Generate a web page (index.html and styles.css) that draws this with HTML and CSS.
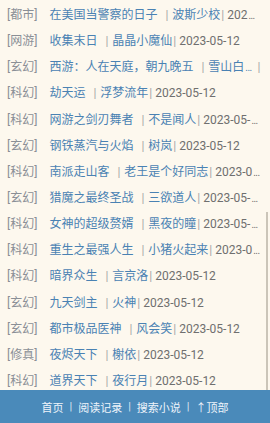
FILE: index.html
```html
<!DOCTYPE html>
<html lang="zh">
<head>
<meta charset="utf-8">
<link rel="stylesheet" href="styles.css">
</head>
<body>
<ul class="list">
  <li class="row"><span class="cat">[都市]</span><span class="title">在美国当警察的日子</span><span class="sep1">|</span><span class="author">波斯少校</span><span class="sep2">|</span><span class="date">202<span class="ell">...</span></span></li>
  <li class="row"><span class="cat">[网游]</span><span class="title">收集末日</span><span class="sep1">|</span><span class="author">晶晶小魔仙</span><span class="sep2">|</span><span class="date">2023-05-12</span></li>
  <li class="row"><span class="cat">[玄幻]</span><span class="title">西游：人在天庭，朝九晚五</span><span class="sep1">|</span><span class="author">雪山白<span class="ell">...</span></span><span class="sep3">|</span></li>
  <li class="row"><span class="cat">[科幻]</span><span class="title">劫天运</span><span class="sep1">|</span><span class="author">浮梦流年</span><span class="sep2">|</span><span class="date">2023-05-12</span></li>
  <li class="row"><span class="cat">[科幻]</span><span class="title">网游之剑刃舞者</span><span class="sep1">|</span><span class="author">不是闻人</span><span class="sep2">|</span><span class="date">2023-05-<span class="ell">...</span></span></li>
  <li class="row"><span class="cat">[玄幻]</span><span class="title">钢铁蒸汽与火焰</span><span class="sep1">|</span><span class="author">树岚</span><span class="sep2">|</span><span class="date">2023-05-12</span></li>
  <li class="row"><span class="cat">[科幻]</span><span class="title">南派走山客</span><span class="sep1">|</span><span class="author">老王是个好同志</span><span class="sep2">|</span><span class="date">2023-0<span class="ell">...</span></span></li>
  <li class="row"><span class="cat">[玄幻]</span><span class="title">猎魔之最终圣战</span><span class="sep1">|</span><span class="author">三欲道人</span><span class="sep2">|</span><span class="date">2023-05-<span class="ell">...</span></span></li>
  <li class="row"><span class="cat">[科幻]</span><span class="title">女神的超级赘婿</span><span class="sep1">|</span><span class="author">黑夜的瞳</span><span class="sep2">|</span><span class="date">2023-05-<span class="ell">...</span></span></li>
  <li class="row"><span class="cat">[科幻]</span><span class="title">重生之最强人生</span><span class="sep1">|</span><span class="author">小猪火起来</span><span class="sep2">|</span><span class="date">2023-0<span class="ell">...</span></span></li>
  <li class="row"><span class="cat">[科幻]</span><span class="title">暗界众生</span><span class="sep1">|</span><span class="author">言京洛</span><span class="sep2">|</span><span class="date">2023-05-12</span></li>
  <li class="row"><span class="cat">[玄幻]</span><span class="title">九天剑主</span><span class="sep1">|</span><span class="author">火神</span><span class="sep2">|</span><span class="date">2023-05-12</span></li>
  <li class="row"><span class="cat">[玄幻]</span><span class="title">都市极品医神</span><span class="sep1">|</span><span class="author">风会笑</span><span class="sep2">|</span><span class="date">2023-05-12</span></li>
  <li class="row"><span class="cat">[修真]</span><span class="title">夜烬天下</span><span class="sep1">|</span><span class="author">榭依</span><span class="sep2">|</span><span class="date">2023-05-12</span></li>
  <li class="row"><span class="cat">[科幻]</span><span class="title">道界天下</span><span class="sep1">|</span><span class="author">夜行月</span><span class="sep2">|</span><span class="date">2023-05-12</span></li>
</ul>
<div class="scrollbar"></div>
<nav class="footer">
  <a class="nav-link">首页</a><span class="nav-sep">|</span><a class="nav-link">阅读记录</a><span class="nav-sep">|</span><a class="nav-link">搜索小说</a><span class="nav-sep">|</span><a class="nav-link">↑顶部</a>
</nav>
</body>
</html>
```
FILE: styles.css
```css
html, body {
  margin: 0;
  padding: 0;
  background: #fdf8ee;
  height: 100%;
  overflow: hidden;
}
body {
  font-family: Roboto, "Noto Sans CJK SC", sans-serif;
  font-size: 12px;
  color: #6f6f6f;
}
.list {
  list-style: none;
  margin: 0;
  padding: 2px 0 0 7px;
}
.row {
  height: 26.15px;
  line-height: 26.15px;
  white-space: nowrap;
  overflow: hidden;
}
.cat {
  color: #8a8f96;
  margin-right: 12px;
}
.title {
  color: #4a82b3;
}
.author {
  color: #4a82b3;
}
.sep1 {
  color: #a8a8a8;
  margin: 0 4px 0 8px;
}
.sep2 {
  color: #a8a8a8;
  margin: 0 3px 0 1px;
}
.sep3 {
  color: #a8a8a8;
  margin: 0 0 0 6px;
}
.date {
  color: #6f6f6f;
}
.ell {
  font-size: 10px;
  letter-spacing: -0.6px;
  margin-left: 1px;
}
.scrollbar {
  position: absolute;
  right: 2px;
  top: 212px;
  width: 2px;
  height: 178px;
  background: #cbc5b9;
}
.footer {
  position: fixed;
  left: 0;
  right: 0;
  bottom: 0;
  height: 33px;
  background: #4a8aba;
  display: flex;
  align-items: center;
  justify-content: center;
  font-size: 11px;
  color: #e9f1f8;
}
.nav-link {
  color: #eef4fa;
}
.nav-sep {
  margin: 0 6px 0 6px;
  color: #dde8f2;
}
```
